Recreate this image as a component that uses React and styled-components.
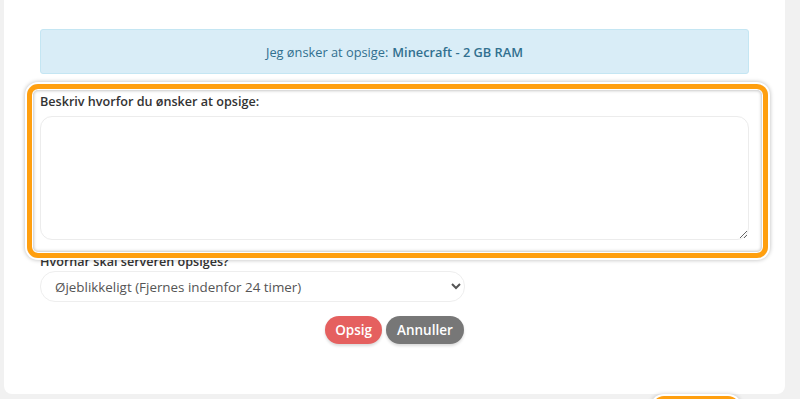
import styled, { createGlobalStyle } from 'styled-components';

const GlobalStyle = createGlobalStyle`
   html, body {
      margin: 0;
      padding: 0;
      background: #f1f1f1;
      font-family: 'Open Sans', 'Liberation Sans', sans-serif;
      color: #333;
      overflow: hidden;
   }
   * {
      box-sizing: border-box;
   }
`;

const Page = styled.div`
   padding: 0 15px 0 4px;
`;

const Card = styled.div`
   background: #fff;
   border-radius: 0 0 8px 8px;
   padding: 29px 36px 48px;
   height: 394px;
`;

const InfoBox = styled.div`
   height: 45px;
   background: #d9edf7;
   border: 1px solid #c4e6f3;
   border-radius: 3px;
   color: #31708f;
   font-size: 12.8px;
   display: flex;
   align-items: center;
   justify-content: center;
   margin-bottom: 19px;
   & strong {
      font-weight: 600;
      margin-left: 4px;
   }
`;

const FormGroup = styled.div`
   position: relative;
   margin-bottom: ${(p) => p.$gap || 0}px;
`;

const Label = styled.label`
   display: block;
   font-size: 12.6px;
   font-weight: 600;
   line-height: 18px;
   color: #333;
   margin-bottom: ${(p) => p.$gap || 0}px;
`;

const TextArea = styled.textarea`
   display: block;
   width: 100%;
   height: 124px;
   border: 1px solid #ececec;
   border-radius: 12px;
   background: #fff;
   resize: vertical;
   font-family: inherit;
   outline: none;
`;

const Select = styled.select`
   display: block;
   width: 425px;
   height: 31px;
   border: 1px solid #eeeeee;
   border-radius: 15px;
   background: #fff;
   font-family: inherit;
   font-size: 13.4px;
   color: #555;
   padding: 0 10px;
   outline: none;
`;

const Highlight = styled.div`
   position: absolute;
   top: -9px;
   left: -13px;
   right: -19px;
   bottom: -18px;
   border: 5px solid #ff9f0f;
   border-radius: 11px;
   box-shadow: 0 0 0 2px #fff, 0 0 4px 2px rgba(0, 0, 0, 0.28),
      inset 0 0 0 1px #fff, inset 0 0 3px 2px rgba(0, 0, 0, 0.22);
   pointer-events: none;
   z-index: 2;
`;

const Actions = styled.div`
   display: flex;
   justify-content: center;
   gap: 4px;
   margin-top: 14px;
`;

const Button = styled.button`
   height: 28px;
   padding: 0 ${(p) => (p.$wide ? 11 : 10)}px;
   border: none;
   border-radius: 14px;
   background: ${(p) => p.$color};
   color: #fff;
   font-family: inherit;
   font-size: 13.5px;
   font-weight: 600;
   box-shadow: 0 2px 3px rgba(0, 0, 0, 0.15);
   cursor: pointer;
`;

const Footer = styled.div`
   padding: 2px 0 0 648px;
`;

const NextTarget = styled.div`
   width: 88px;
   height: 30px;
   background: #ff9f0f;
   border-radius: 12px;
   box-shadow: 0 0 0 2px #fff, 0 0 4px 2px rgba(0, 0, 0, 0.2);
`;

export default function App() {
   return (
      <>
         <GlobalStyle />
         <Page>
            <Card>
               <InfoBox>
                  Jeg ønsker at opsige:<strong>Minecraft - 2 GB RAM</strong>
               </InfoBox>
               <FormGroup $gap={13}>
                  <Label $gap={5}>Beskriv hvorfor du ønsker at opsige:</Label>
                  <TextArea />
                  <Highlight />
               </FormGroup>
               <FormGroup>
                  <Label>Hvornår skal serveren opsiges?</Label>
                  <Select defaultValue="now">
                     <option value="now">Øjeblikkeligt (Fjernes indenfor 24 timer)</option>
                     <option value="end">Ved udgangen af perioden</option>
                  </Select>
               </FormGroup>
               <Actions>
                  <Button $color="#e5605f">Opsig</Button>
                  <Button $color="#777777" $wide>
                     Annuller
                  </Button>
               </Actions>
            </Card>
            <Footer>
               <NextTarget />
            </Footer>
         </Page>
      </>
   );
}
